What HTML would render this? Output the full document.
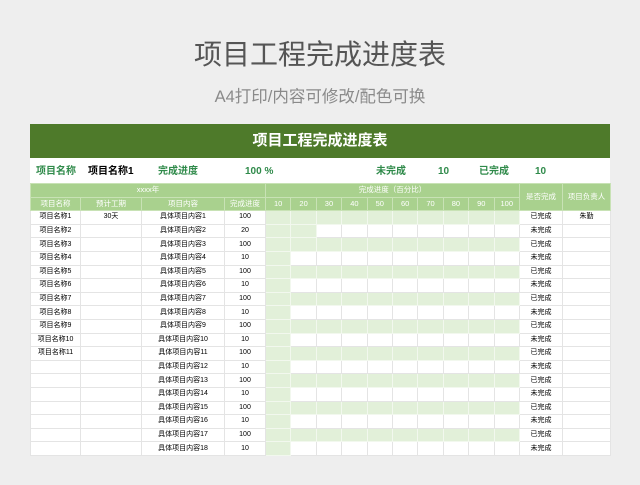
<!DOCTYPE html>
<html><head><meta charset="utf-8"><style>
body{margin:0;width:640px;height:485px;background:#eeeeee;font-family:"Liberation Sans","Noto Sans CJK SC",sans-serif;position:relative;overflow:hidden}
.t1{position:absolute;top:36px;left:0;width:640px;text-align:center;font-size:28px;color:#555;line-height:38px}
.t2{position:absolute;top:86px;left:0;width:640px;text-align:center;font-size:16.5px;color:#8a8a8a;line-height:22px}
.bar{position:absolute;left:30px;top:124px;width:580px;height:34px;background:#4e7a2a;color:#fff;font-size:15px;font-weight:bold;text-align:center;line-height:34px}
.info{position:absolute;left:30px;top:158px;width:580px;height:25px;background:#fff;font-size:10px;font-weight:bold}
.info span{position:absolute;top:0;line-height:27px}
.g{color:#2f8a4a}
table{position:absolute;left:30px;top:183px;border-collapse:collapse;table-layout:fixed;width:580px;font-size:7px;background:#fff}
td{border:1px solid #e4e4e4;padding:0;text-align:center;height:12.6px;line-height:12px;overflow:hidden;white-space:nowrap}
.h td{background:#a9d18e;color:#fff;border-color:#c8e2b5;font-size:7.5px}
.f{background:#e2f0d9;border-color:#f2f8ee}
</style></head><body>
<div class="t1">项目工程完成进度表</div>
<div class="t2">A4打印/内容可修改/配色可换</div>
<div class="bar">项目工程完成进度表</div>
<div class="info">
<span class="g" style="left:6px">项目名称</span>
<span style="left:58px">项目名称1</span>
<span class="g" style="left:128px">完成进度</span>
<span class="g" style="left:215px">100 %</span>
<span class="g" style="left:346px">未完成</span>
<span class="g" style="left:408px">10</span>
<span class="g" style="left:449px">已完成</span>
<span class="g" style="left:505px">10</span>
</div>
<table>
<colgroup><col style="width:50px"><col style="width:61px"><col style="width:83px"><col style="width:41px">
<col style="width:25.4px"><col style="width:25.4px"><col style="width:25.4px"><col style="width:25.4px"><col style="width:25.4px"><col style="width:25.4px"><col style="width:25.4px"><col style="width:25.4px"><col style="width:25.4px"><col style="width:25.4px">
<col style="width:43px"><col style="width:48px"></colgroup>
<tr class="h"><td colspan="4">xxxx年</td><td colspan="10">完成进度（百分比）</td><td rowspan="2">是否完成</td><td rowspan="2">项目负责人</td></tr>
<tr class="h"><td>项目名称</td><td>预计工期</td><td>项目内容</td><td>完成进度</td><td>10</td><td>20</td><td>30</td><td>40</td><td>50</td><td>60</td><td>70</td><td>80</td><td>90</td><td>100</td></tr>
<tbody id="b"></tbody>
</table>
<script>
var v=[100,20,100,10,100,10,100,10,100,10,100,10,100,10,100,10,100,10],h='';
for(var i=0;i<18;i++){var n=v[i]/10;h+='<tr><td>'+(i<11?'项目名称'+(i+1):'')+'</td><td>'+(i==0?'30天':'')+'</td><td>具体项目内容'+(i+1)+'</td><td>'+v[i]+'</td>';
for(var j=0;j<10;j++)h+='<td'+(j<n?' class="f"':'')+'></td>';
h+='<td>'+(v[i]==100?'已完成':'未完成')+'</td><td>'+(i==0?'朱勤':'')+'</td></tr>';}
document.getElementById('b').innerHTML=h;
</script>
</body></html>
